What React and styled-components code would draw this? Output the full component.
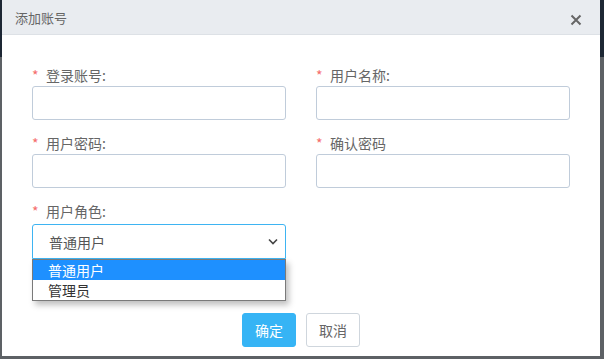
import React from "react";
import styled, { createGlobalStyle } from "styled-components";

const Global = createGlobalStyle`
  html, body { margin: 0; padding: 0; }
  body {
    width: 604px; height: 359px; overflow: hidden;
    background: linear-gradient(#1d2734 0, #1d2734 57px, #5d6165 57px);
    font-family: "Noto Sans CJK SC", "Noto Sans", sans-serif;
  }
`;

const Page = styled.div`
  position: relative;
  width: 604px;
  height: 359px;
`;

const Modal = styled.div`
  position: absolute;
  left: 2px;
  top: 0;
  width: 598px;
  height: 356px;
  background: #fff;
  display: flex;
  flex-direction: column;
`;

const Header = styled.div`
  height: 35px;
  box-sizing: border-box;
  background: #e9ecf0;
  border-bottom: 1px solid #dde1e6;
  display: flex;
  align-items: center;
  justify-content: space-between;
  padding: 0 18px 0 13px;
`;

const Title = styled.div`
  font-size: 13px;
  color: #666;
`;

const Close = styled.button`
  border: 0;
  background: none;
  padding: 0;
  width: 12px;
  height: 12px;
  margin-top: 6px;
  display: flex;
  cursor: pointer;
`;

const Body = styled.div`
  padding: 30px 30px 0 30px;
  display: grid;
  grid-template-columns: 254px 254px;
  column-gap: 30px;
  row-gap: 13px;
`;

const Field = styled.div`
  display: flex;
  flex-direction: column;
  position: relative;
`;

const Label = styled.label`
  display: flex;
  align-items: center;
  height: 20px;
  margin-bottom: 1px;
  font-size: 14px;
  color: #666;
  line-height: 20px;
`;

const Star = styled.span`
  color: #f56c6c;
  font-size: 14px;
  width: 14px;
`;

const Input = styled.input`
  box-sizing: border-box;
  width: 254px;
  height: 34px;
  border: 1px solid #c0ccda;
  border-radius: 3px;
  outline: none;
  padding: 0 10px;
  font-family: inherit;
`;

const SelectBox = styled.div`
  box-sizing: border-box;
  width: 254px;
  height: 35px;
  margin-top: 2px;
  border: 1px solid ${(p) => (p.$focused ? "#3eb4f2" : "#c0ccda")};
  border-radius: 3px 3px 0 0;
  display: flex;
  align-items: center;
  justify-content: space-between;
  padding: 0 7px 0 16px;
  font-size: 14px;
  color: #555;
`;

const Options = styled.ul`
  position: absolute;
  left: 0;
  top: 100%;
  width: 254px;
  box-sizing: border-box;
  margin: 0;
  padding: 0;
  list-style: none;
  background: #fff;
  border: 1px solid #7a7a7a;
  box-shadow: 3px 4px 6px rgba(0, 0, 0, 0.25);
  z-index: 2;
`;

const Option = styled.li`
  height: 20px;
  line-height: 20px;
  padding-left: 15px;
  font-size: 14px;
  color: ${(p) => (p.$active ? "#fff" : "#333")};
  background: ${(p) => (p.$active ? "#1e90ff" : "#fff")};
`;

const Footer = styled.div`
  margin-top: auto;
  margin-bottom: 9px;
  display: flex;
  justify-content: center;
  gap: 10px;
`;

const Button = styled.button`
  height: 34px;
  box-sizing: border-box;
  padding: 0 12px;
  border-radius: 3px;
  font-family: inherit;
  font-size: 14px;
  white-space: nowrap;
  border: 1px solid ${(p) => (p.$primary ? "#36b4f5" : "#cfd6dd")};
  background: ${(p) => (p.$primary ? "#36b4f5" : "#fff")};
  color: ${(p) => (p.$primary ? "#fff" : "#666")};
`;

export default function App() {
  return (
    <>
      <Global />
      <Page>
        <Modal>
          <Header>
            <Title>添加账号</Title>
            <Close aria-label="close">
              <svg width="12" height="12" viewBox="0 0 12 12">
                <path d="M1.5 1.5 L10.5 10.5 M10.5 1.5 L1.5 10.5" stroke="#666" strokeWidth="2" />
              </svg>
            </Close>
          </Header>
          <Body>
            <Field>
              <Label><Star>*</Star>登录账号:</Label>
              <Input />
            </Field>
            <Field>
              <Label><Star>*</Star>用户名称:</Label>
              <Input />
            </Field>
            <Field>
              <Label><Star>*</Star>用户密码:</Label>
              <Input />
            </Field>
            <Field>
              <Label><Star>*</Star>确认密码</Label>
              <Input />
            </Field>
            <Field>
              <Label><Star>*</Star>用户角色:</Label>
              <SelectBox $focused>
                <span>普通用户</span>
                <svg width="10" height="7" viewBox="0 0 10 7">
                  <path d="M1 1.5 L5 5.5 L9 1.5" fill="none" stroke="#444" strokeWidth="1.6" />
                </svg>
              </SelectBox>
              <Options>
                <Option $active>普通用户</Option>
                <Option>管理员</Option>
              </Options>
            </Field>
          </Body>
          <Footer>
            <Button $primary>确定</Button>
            <Button>取消</Button>
          </Footer>
        </Modal>
      </Page>
    </>
  );
}
